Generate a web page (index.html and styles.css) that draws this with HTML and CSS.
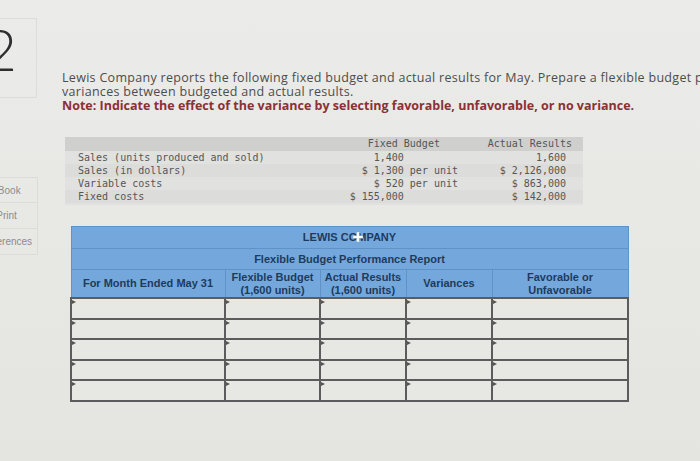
FILE: index.html
```html
<!DOCTYPE html>
<html>
<head>
<meta charset="utf-8">
<link rel="stylesheet" href="styles.css">
</head>
<body>
<div class="page">
  <aside class="side">
    <div class="qbox"><span class="qnum">2</span></div>
    <nav class="nav">
      <div class="nav-item">eBook</div>
      <div class="nav-item">Print</div>
      <div class="nav-item">References</div>
    </nav>
  </aside>
  <main class="main">
    <p class="prompt">Lewis Company reports the following fixed budget and actual results for May. Prepare a flexible budget performance report showing<br>variances between budgeted and actual results.<br><b class="note">Note: Indicate the effect of the variance by selecting favorable, unfavorable, or no variance.</b></p>

    <div class="data">
      <div class="drow dhead"><span class="c1"></span><span class="c2">Fixed Budget   </span><span class="c3">Actual Results</span></div>
      <div class="drow"><span class="c1">Sales (units produced and sold)</span><span class="c2">1,400         </span><span class="c3">1,600 </span></div>
      <div class="drow alt"><span class="c1">Sales (in dollars)</span><span class="c2">$ 1,300 per unit</span><span class="c3">$ 2,126,000 </span></div>
      <div class="drow"><span class="c1">Variable costs</span><span class="c2">$ 520 per unit</span><span class="c3">$ 863,000 </span></div>
      <div class="drow alt"><span class="c1">Fixed costs</span><span class="c2">$ 155,000         </span><span class="c3">$ 142,000 </span></div>
    </div>

    <table class="report">
      <colgroup>
        <col class="w1"><col class="w2"><col class="w3"><col class="w4"><col class="w5">
      </colgroup>
      <thead>
        <tr class="t1"><th colspan="5"><span class="title">LEWIS COMPANY<span class="cursor"><svg width="10" height="10" viewBox="0 0 11 11"><path d="M4 0h3v4h4v3H7v4H4V7H0V4h4z" fill="#fff" stroke="#8aa" stroke-width="0.5"/></svg></span></span></th></tr>
        <tr class="t2"><th colspan="5">Flexible Budget Performance Report</th></tr>
        <tr class="t3">
          <th>For Month Ended May 31</th>
          <th>Flexible Budget<br>(1,600 units)</th>
          <th>Actual Results<br>(1,600 units)</th>
          <th>Variances</th>
          <th>Favorable or<br>Unfavorable</th>
        </tr>
      </thead>
      <tbody>
        <tr><td></td><td></td><td></td><td></td><td></td></tr>
        <tr><td></td><td></td><td></td><td></td><td></td></tr>
        <tr><td></td><td></td><td></td><td></td><td></td></tr>
        <tr><td></td><td></td><td></td><td></td><td></td></tr>
        <tr><td></td><td></td><td></td><td></td><td></td></tr>
      </tbody>
    </table>
  </main>
</div>
</body>
</html>
```

FILE: styles.css
```css
html, body {
  margin: 0;
  padding: 0;
}
body {
  width: 700px;
  height: 461px;
  overflow: hidden;
  background: linear-gradient(180deg, #ebebe9 0%, #e7e7e4 60%, #e4e5e1 100%);
  font-family: "Open Sans", "Lato", sans-serif;
}
.page {
  display: flex;
  height: 461px;
}
.side {
  width: 40px;
  flex: none;
  overflow: hidden;
  display: flex;
  flex-direction: column;
}
.qbox {
  margin-top: 18px;
  margin-left: -20px;
  width: 57px;
  height: 80px;
  border: 1px solid #dcdcd9;
  box-sizing: border-box;
  display: flex;
  align-items: flex-start;
  justify-content: flex-end;
  padding-right: 19px;
}
.qnum {
  font-family: "Lato", sans-serif;
  font-weight: 300;
  font-size: 58px;
  line-height: 1;
  color: #2e2e2e;
  margin-top: 1px;
}
.nav {
  margin-top: 79px;
  margin-left: -25px;
  width: 63px;
  display: flex;
  flex-direction: column;
}
.nav-item {
  height: 26px;
  border: 1px solid #dcdcd9;
  border-top: none;
  box-sizing: border-box;
  display: flex;
  align-items: center;
  justify-content: center;
  font-family: "Liberation Sans", sans-serif;
  font-size: 10px;
  color: #8c8c8c;
  white-space: nowrap;
}
.nav-item:first-child {
  border-top: 1px solid #dcdcd9;
}
.main {
  flex: 1;
  min-width: 0;
  padding-top: 71px;
  white-space: nowrap;
}
.prompt {
  margin: 0 0 0 22px;
  font-size: 12.5px;
  line-height: 14px;
  letter-spacing: 0.3px;
  color: #4d4d4d;
}
.note {
  color: #8a3136;
  font-weight: 700;
  letter-spacing: 0;
}
.data {
  margin: 24px 0 0 25px;
  width: 518px;
  font-family: "DejaVu Sans Mono", "Liberation Mono", monospace;
  font-size: 10px;
  color: #565656;
  background: #e1e1df;
  padding-bottom: 2px;
}
.drow {
  display: flex;
  height: 13px;
  line-height: 13px;
  white-space: pre;
}
.drow.alt {
  background: #dcdcda;
}
.dhead {
  background: #cfcfcd;
  height: 14px;
  line-height: 13px;
}
.c1 {
  width: 267px;
  padding-left: 13px;
  box-sizing: border-box;
}
.c2 {
  width: 126px;
  text-align: right;
}
.c3 {
  width: 114px;
  text-align: right;
}
.report {
  margin: 21px 0 0 30px;
  width: 557px;
  border-collapse: collapse;
  table-layout: fixed;
  font-family: "Liberation Sans", Arial, sans-serif;
}
.w1 { width: 154px; }
.w2 { width: 95px; }
.w3 { width: 86px; }
.w4 { width: 86px; }
.w5 { width: 136px; }
.report th {
  background: #74a8dc;
  color: #1e3b5d;
  font-size: 11px;
  font-weight: 700;
  line-height: 13px;
  padding: 0;
  border: 1px solid #5f93c8;
  text-align: center;
  vertical-align: middle;
}
.t1 th { height: 21px; }
.t2 th { height: 20px; }
.t3 th { height: 27px; }
.title {
  position: relative;
}
.cursor {
  position: absolute;
  left: 50px;
  top: 1px;
  line-height: 0;
}
.report td {
  height: 18.5px;
  padding: 0;
  background: #e7e8e4;
  border: 2px solid #5c5c5c;
  position: relative;
}
.report td::before {
  content: "";
  position: absolute;
  left: 0;
  top: 1px;
  border-top: 2.5px solid transparent;
  border-bottom: 2.5px solid transparent;
  border-left: 4px solid #555;
}
```
